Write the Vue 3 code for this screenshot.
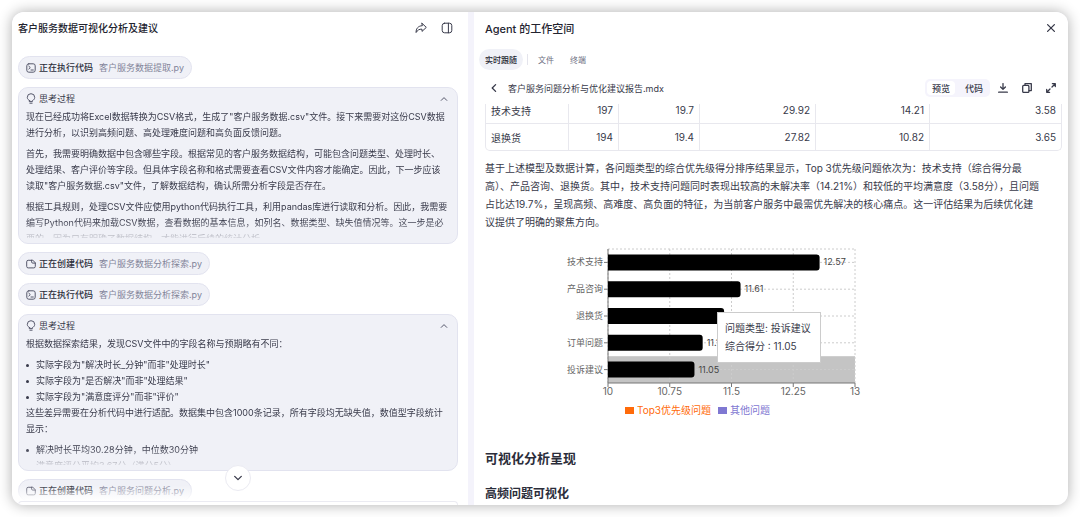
<template>
  <div class="page">
    <div class="window">
      <section class="chat">
        <header class="chat-header">
          <h1>客户服务数据可视化分析及建议</h1>
          <div class="header-actions">
            <button class="icon-btn" aria-label="分享">
              <svg width="12" height="12" viewBox="0 0 12 12">
                <path d="M7 1.3 11.3 5.4 7 9.4V7.2C4.3 7 2.6 8 1.1 10.5.9 6.8 3 3.9 7 3.7Z" />
              </svg>
            </button>
            <button class="icon-btn" aria-label="切换侧栏">
              <svg width="12" height="12" viewBox="0 0 12 12">
                <rect x="1.2" y="1.2" width="9.6" height="9.6" rx="2.4" />
                <path d="M7.4 1.2v9.6" />
              </svg>
            </button>
          </div>
        </header>

        <div class="messages">
          <template v-for="(item, i) in messages" :key="i">
            <div v-if="item.type !== 'think'" class="step">
              <svg v-if="item.type === 'run'" width="10" height="10" viewBox="0 0 10 10">
                <rect x="0.8" y="0.8" width="8.4" height="8.4" rx="2" />
                <path d="M2.8 3.2 4.3 4.6 2.8 6M5 7h2.3" />
              </svg>
              <svg v-else width="10" height="10" viewBox="0 0 10 10">
                <path d="M5.6 1.3H2.2A1.5 1.5 0 0 0 .7 2.8v4.6a1.5 1.5 0 0 0 1.5 1.5h5.6a1.5 1.5 0 0 0 1.5-1.5V4.2M5.6 1.3v1.6a1.2 1.2 0 0 0 1.2 1.2h2.5M5.6 1.3h1.2l2.5 2.4" />
              </svg>
              <span class="step-label">{{ item.label }}</span>
              <span class="step-file">{{ item.file }}</span>
            </div>
            <article v-else class="think">
              <div class="think-header">
                <svg width="10" height="11" viewBox="0 0 10 11">
                  <path d="M3.6 7.6C2.2 7 1.3 5.8 1.3 4.4a3.7 3.7 0 0 1 7.4 0C8.7 5.8 7.8 7 6.4 7.6v1H3.6ZM3.9 10.2h2.2" />
                </svg>
                <span>思考过程</span>
                <button class="icon-btn fold" aria-label="收起">
                  <svg width="8" height="8" viewBox="0 0 8 8"><path d="M1.2 5.4 4 2.6l2.8 2.8" /></svg>
                </button>
              </div>
              <div class="think-body">
                <template v-for="(block, j) in item.blocks" :key="j">
                  <ul v-if="block.list">
                    <li v-for="li in block.list" :key="li">{{ li }}</li>
                  </ul>
                  <p v-else>{{ block.text }}</p>
                </template>
              </div>
            </article>
          </template>
          <button class="scroll-down" aria-label="滚动到底部">
            <svg width="10" height="10" viewBox="0 0 10 10"><path d="M1.7 3.4 5 6.6l3.3-3.2" /></svg>
          </button>
        </div>
        <div class="composer"></div>
      </section>

      <section class="workspace">
        <header class="workspace-header">
          <h2>Agent 的工作空间</h2>
          <button class="icon-btn" aria-label="关闭">
            <svg width="10" height="10" viewBox="0 0 10 10"><path d="m1.6 1.6 6.8 6.8M8.4 1.6 1.6 8.4" /></svg>
          </button>
        </header>

        <nav class="tabs">
          <button class="tab active">实时跟随</button>
          <span class="tab-line"></span>
          <button class="tab">文件</button>
          <button class="tab">终端</button>
        </nav>

        <div class="file-bar">
          <button class="icon-btn" aria-label="返回">
            <svg width="10" height="10" viewBox="0 0 10 10"><path d="M6.6 1.6 3.2 5l3.4 3.4" /></svg>
          </button>
          <span class="file-name">客户服务问题分析与优化建议报告.mdx</span>
          <div class="switcher">
            <button class="on">预览</button>
            <button>代码</button>
          </div>
          <button class="icon-btn" aria-label="下载">
            <svg width="10" height="10" viewBox="0 0 10 10"><path d="M5 .6v5.6M2.6 4 5 6.4 7.4 4M.6 9.2h8.8" /></svg>
          </button>
          <button class="icon-btn" aria-label="复制">
            <svg width="10" height="10" viewBox="0 0 10 10">
              <rect x="0.7" y="2.4" width="6.2" height="7" rx="1" />
              <path d="M3 2.2V.7h6.3v6.9H7.1" />
            </svg>
          </button>
          <button class="icon-btn" aria-label="全屏">
            <svg width="10" height="10" viewBox="0 0 10 10"><path d="M6 4 9.2.8M6.4.7h2.9v2.9M4 6 .8 9.2M.7 6.4v2.9h2.9" /></svg>
          </button>
        </div>

        <div class="report">
          <table>
            <colgroup>
              <col class="c-name" />
              <col class="c-count" />
              <col class="c-ratio" />
              <col class="c-time" />
              <col class="c-rate" />
              <col class="c-score" />
            </colgroup>
            <tbody>
              <tr v-for="row in rows" :key="row[0]">
                <td v-for="cell in row" :key="cell">{{ cell }}</td>
              </tr>
            </tbody>
          </table>

          <p class="summary">
            基于上述模型及数据计算，各问题类型的综合优先级得分排序结果显示，Top 3优先级问题依次为：技术支持（综合得分最<br />
            高）、产品咨询、退换货。其中，技术支持问题同时表现出较高的未解决率（14.21%）和较低的平均满意度（3.58分），且问题<br />
            占比达19.7%，呈现高频、高难度、高负面的特征，为当前客户服务中最需优先解决的核心痛点。这一评估结果为后续优化建<br />
            议提供了明确的聚焦方向。
          </p>

          <div class="chart">
            <svg class="plot" width="310" height="156" viewBox="0 0 310 156">
              <rect :x="left" :y="top + band * 4" :width="plotW" :height="band" fill="#c4c4c4" />
              <g class="grid">
                <line v-for="(b, i) in bars" :key="b.name" :x1="left" :x2="left + plotW" :y1="midY(i)" :y2="midY(i)" />
                <line :x1="left" :x2="left + plotW" :y1="top" :y2="top" />
                <line v-for="t in ticks" :key="t" :x1="scaleX(t)" :x2="scaleX(t)" :y1="top" :y2="top + plotH" />
              </g>
              <g class="axis">
                <line :x1="left" :x2="left" :y1="top" :y2="top + plotH" />
                <line :x1="left" :x2="left + plotW" :y1="top + plotH" :y2="top + plotH" />
                <line v-for="t in ticks" :key="t" :x1="scaleX(t)" :x2="scaleX(t)" :y1="top + plotH" :y2="top + plotH + 4" />
                <line v-for="(b, i) in bars" :key="b.name" :x1="left - 4" :x2="left" :y1="midY(i)" :y2="midY(i)" />
              </g>
              <g v-for="(b, i) in bars" :key="b.name">
                <path :d="barPath(b.value, i)" />
                <text class="name" :x="left - 5" :y="midY(i) + 3">{{ b.name }}</text>
                <text class="value" :x="scaleX(b.value) + 4" :y="midY(i) + 3">{{ b.value }}</text>
              </g>
              <text v-for="t in ticks" :key="t" class="tick" :x="scaleX(t)" y="152">{{ t }}</text>
            </svg>
            <div class="tooltip">
              <div>问题类型: 投诉建议</div>
              <div>综合得分 : 11.05</div>
            </div>
            <div class="legend">
              <span class="top3"><i></i>Top3优先级问题</span>
              <span class="other"><i></i>其他问题</span>
            </div>
          </div>

          <h2 class="section-title">可视化分析呈现</h2>
          <h3 class="sub-title">高频问题可视化</h3>
        </div>
      </section>
    </div>
  </div>
</template>

<script setup>
const messages = [
  { type: 'run', label: '正在执行代码', file: '客户服务数据提取.py' },
  {
    type: 'think',
    blocks: [
      { text: '现在已经成功将Excel数据转换为CSV格式，生成了"客户服务数据.csv"文件。接下来需要对这份CSV数据进行分析，以识别高频问题、高处理难度问题和高负面反馈问题。' },
      { text: '首先，我需要明确数据中包含哪些字段。根据常见的客户服务数据结构，可能包含问题类型、处理时长、处理结果、客户评价等字段。但具体字段名称和格式需要查看CSV文件内容才能确定。因此，下一步应该读取"客户服务数据.csv"文件，了解数据结构，确认所需分析字段是否存在。' },
      { text: '根据工具规则，处理CSV文件应使用python代码执行工具，利用pandas库进行读取和分析。因此，我需要编写Python代码来加载CSV数据，查看数据的基本信息，如列名、数据类型、缺失值情况等。这一步是必要的，因为只有明确了数据结构，才能进行后续的统计分析。' },
    ],
  },
  { type: 'create', label: '正在创建代码', file: '客户服务数据分析探索.py' },
  { type: 'run', label: '正在执行代码', file: '客户服务数据分析探索.py' },
  {
    type: 'think',
    blocks: [
      { text: '根据数据探索结果，发现CSV文件中的字段名称与预期略有不同：' },
      { list: ['实际字段为"解决时长_分钟"而非"处理时长"', '实际字段为"是否解决"而非"处理结果"', '实际字段为"满意度评分"而非"评价"'] },
      { text: '这些差异需要在分析代码中进行适配。数据集中包含1000条记录，所有字段均无缺失值，数值型字段统计显示：' },
      { list: ['解决时长平均30.28分钟，中位数30分钟', '满意度评分平均3.67分（满分5分）'] },
    ],
  },
  { type: 'create', label: '正在创建代码', file: '客户服务问题分析.py' },
]

const rows = [
  ['技术支持', '197', '19.7', '29.92', '14.21', '3.58'],
  ['退换货', '194', '19.4', '27.82', '10.82', '3.65'],
]

// 图表数据
const bars = [
  { name: '技术支持', value: 12.57 },
  { name: '产品咨询', value: 11.61 },
  { name: '退换货', value: 11.41 },
  { name: '订单问题', value: 11.15 },
  { name: '投诉建议', value: 11.05 },
]
const ticks = [10, 10.75, 11.5, 12.25, 13]

const left = 48
const top = 6
const plotW = 247
const plotH = 134
const band = plotH / bars.length

const scaleX = (v) => left + ((v - 10) / 3) * plotW
const midY = (i) => top + band * (i + 0.5)
// 只有右侧两个角是圆角
const barPath = (v, i) => {
  const y = midY(i) - 8
  const w = scaleX(v) - left
  return `M${left} ${y}h${w - 3}a3 3 0 0 1 3 3v10a3 3 0 0 1 -3 3h${3 - w}z`
}
</script>

<style>
body {
  margin: 0;
  background: #fff;
}
</style>

<style scoped>
.page {
  box-sizing: border-box;
  height: 100vh;
  padding: 12px;
  font-family: Inter, "Noto Sans CJK SC", sans-serif;
  font-size: 9px;
  color: #383a4a;
}

.window {
  display: grid;
  grid-template-columns: 76fr 99fr;
  column-gap: 6px;
  height: 100%;
  overflow: hidden;
  background: #f4f3fb;
  border-radius: 12px;
  box-shadow: 0 0 14px rgba(0, 0, 0, 0.32);
}

h1,
h2,
h3,
p,
ul {
  margin: 0;
  font-weight: 500;
}

button {
  padding: 0;
  border: none;
  background: none;
  font: inherit;
  color: inherit;
  cursor: pointer;
}

svg {
  display: block;
  flex: none;
}

.icon-btn svg,
.step svg,
.think-header svg,
.scroll-down svg {
  fill: none;
  stroke: currentColor;
  stroke-linecap: round;
  stroke-linejoin: round;
}

.file-bar svg,
.workspace-header svg,
.scroll-down svg {
  stroke-width: 1.3;
}

/* 左侧对话 */
.chat {
  display: flex;
  flex-direction: column;
  min-width: 0;
  min-height: 0;
  padding: 0 10px 0 6px;
  background: #fff;
}

.chat-header {
  display: flex;
  flex: none;
  align-items: center;
  justify-content: space-between;
  height: 31px;
  margin-bottom: 13px;
  padding-right: 5px;
}

.chat-header h1 {
  font-size: 10px;
  color: #23242f;
}

.header-actions {
  display: flex;
  gap: 14px;
}

.messages {
  position: relative;
  display: flex;
  flex: 1;
  flex-direction: column;
  align-items: flex-start;
  gap: 8px;
  min-height: 0;
  overflow: hidden;
}

.messages::after {
  content: "";
  position: absolute;
  right: 0;
  bottom: 0;
  left: 0;
  height: 16px;
  background: linear-gradient(rgba(255, 255, 255, 0), #fff);
}

.step {
  display: flex;
  flex: none;
  align-items: center;
  gap: 3px;
  box-sizing: border-box;
  height: 23px;
  padding: 0 7px;
  border: 1px solid #e2e3ef;
  border-radius: 12px;
  background: #f0f1f7;
}

.step svg {
  color: #55576a;
}

.step-label {
  font-weight: 500;
  color: #2b2d3a;
}

.step-file {
  margin-left: 3px;
  color: #83859a;
}

.think {
  flex: none;
  box-sizing: border-box;
  width: 100%;
  padding: 0 9px 5px 7px;
  border: 1px solid #e2e3ef;
  border-radius: 10px;
  background: #f0f1f7;
}

.think-header {
  display: flex;
  align-items: center;
  gap: 3px;
  height: 21px;
}

.think-header svg {
  color: #55576a;
}

.fold {
  margin-left: auto;
}

.think-body {
  height: 129px;
  overflow: hidden;
  line-height: 16px;
  mask-image: linear-gradient(#000 112px, transparent 132px);
}

.think-body p {
  font-weight: 400;
}

.think-body p + p,
.think-body p + ul {
  margin-top: 5px;
}

.think-body ul {
  padding: 0;
  font-weight: 400;
  list-style: none;
}

.think-body li {
  display: flex;
  align-items: center;
  gap: 7px;
}

.think-body li::before {
  content: "";
  width: 3px;
  height: 3px;
  border-radius: 50%;
  background: currentColor;
}

.scroll-down {
  position: absolute;
  bottom: 10px;
  left: 50%;
  z-index: 1;
  display: flex;
  align-items: center;
  justify-content: center;
  width: 26px;
  height: 26px;
  border: 1px solid #ebebf2;
  border-radius: 50%;
  background: #fff;
  transform: translateX(-50%);
}

.composer {
  flex: none;
  height: 3px;
  border: 1px solid #ebebf2;
  border-bottom: none;
  border-radius: 10px 10px 0 0;
}

/* 右侧工作空间 */
.workspace {
  display: flex;
  flex-direction: column;
  min-width: 0;
  min-height: 0;
  padding: 0 6px 0 11px;
  background: #fff;
}

.workspace-header {
  display: flex;
  flex: none;
  align-items: center;
  justify-content: space-between;
  height: 31px;
  padding-right: 6px;
}

.workspace-header h2 {
  font-size: 11px;
  color: #23242f;
}

.tabs {
  display: flex;
  flex: none;
  align-items: center;
  height: 21px;
  margin: 6px 0 0 -6px;
  font-size: 8px;
  color: #6c6e80;
}

.tab {
  height: 21px;
  padding: 0 8px;
}

.tab.active {
  padding: 0 6px;
  border-radius: 11px;
  background: #f0f1f7;
  font-weight: 500;
  color: #23242f;
}

.tab-line {
  width: 1px;
  height: 11px;
  margin: 0 2px 0 4px;
  background: #e4e4ec;
}

.file-bar {
  display: flex;
  flex: none;
  align-items: center;
  gap: 14px;
  height: 18px;
  margin: 9px 6px 7px 4px;
}

.file-name {
  flex: 1;
  margin-left: -5px;
}

.switcher {
  display: flex;
  box-sizing: border-box;
  height: 18px;
  margin-right: -6px;
  padding: 2px;
  border-radius: 5px;
  background: #f5f4fc;
  font-weight: 500;
}

.switcher button {
  padding: 0 5px;
  border-radius: 4px;
}

.switcher button + button {
  margin-left: 5px;
}

.switcher .on {
  background: #fff;
}

.report {
  flex: 1;
  min-height: 0;
  overflow: hidden;
}

/* 表格滚动了一部分，第一行上沿被裁掉 */
table {
  width: 100%;
  margin-top: -7px;
  border: 1px solid #e8e8ee;
  border-top: none;
  border-radius: 0 0 5px 5px;
  border-spacing: 0;
  table-layout: fixed;
  font-size: 10px;
}

.c-name {
  width: 83px;
}

.c-count {
  width: 50px;
}

.c-ratio {
  width: 81px;
}

.c-time {
  width: 116px;
}

.c-rate {
  width: 114px;
}

td {
  box-sizing: border-box;
  height: 27px;
  padding: 0 5px;
  border-right: 1px solid #e8e8ee;
  border-bottom: 1px solid #e8e8ee;
  text-align: right;
}

td:first-child {
  text-align: left;
}

td:last-child {
  border-right: none;
}

tr:last-child td {
  height: 26px;
  border-bottom: none;
}

.summary {
  margin-top: 8px;
  font-size: 10px;
  font-weight: 400;
  line-height: 18px;
  white-space: nowrap;
}

.chart {
  position: relative;
  margin: 12px 0 0 75px;
}

.grid line {
  stroke: #ccc;
  stroke-dasharray: 2 2;
}

.axis line {
  stroke: #777;
}

.plot text {
  fill: #666;
}

.plot .name {
  font-size: 9px;
  text-anchor: end;
}

.plot .value {
  font-size: 9px;
  fill: #444;
}

.plot .tick {
  font-size: 10px;
  text-anchor: middle;
}

.tooltip {
  position: absolute;
  top: 69px;
  left: 157px;
  box-sizing: border-box;
  padding: 6px 9px 7px 7px;
  border: 1px solid #ccc;
  background: #fff;
  font-size: 10px;
  line-height: 18px;
  white-space: nowrap;
}

.legend {
  display: flex;
  gap: 7px;
  margin-top: 1px;
  padding-left: 65px;
  font-size: 10px;
  line-height: 20px;
}

.legend span {
  display: flex;
  align-items: center;
  gap: 3px;
}

.legend i {
  width: 9px;
  height: 7px;
  background: currentColor;
}

.top3 {
  color: #ff6b0a;
}

.other {
  color: #7f78d2;
}

.section-title {
  margin-top: 28px;
  font-size: 13px;
  font-weight: 600;
  line-height: 20px;
  color: #2b2d3a;
}

.sub-title {
  margin-top: 17px;
  font-size: 12px;
  font-weight: 600;
  line-height: 18px;
  color: #2b2d3a;
}
</style>
